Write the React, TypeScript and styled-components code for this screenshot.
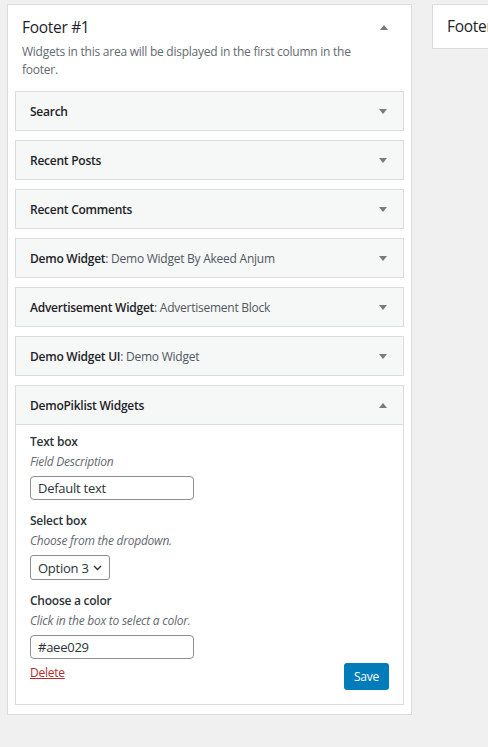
import styled, { createGlobalStyle } from "styled-components";

const GlobalStyle = createGlobalStyle`
  html, body {
    margin: 0;
    padding: 0;
    background: #f0f0f1;
    overflow: hidden;
  }
  body {
    font-family: "Open Sans", "Noto Sans", sans-serif;
    font-size: 12px;
    letter-spacing: -0.25px;
    color: #1d2327;
  }
  * {
    box-sizing: border-box;
  }
`;

type Widget = {
  name: string;
  subtitle?: string;
};

const widgets: Widget[] = [
  { name: "Search" },
  { name: "Recent Posts" },
  { name: "Recent Comments" },
  { name: "Demo Widget", subtitle: "Demo Widget By Akeed Anjum" },
  { name: "Advertisement Widget", subtitle: "Advertisement Block" },
  { name: "Demo Widget UI", subtitle: "Demo Widget" },
];

function Arrow({ up }: { up?: boolean }) {
  return (
    <ArrowIcon width="8" height="5" viewBox="0 0 8 5" aria-hidden="true">
      {up ? <polygon points="0,5 8,5 4,0" /> : <polygon points="0,0 8,0 4,5" />}
    </ArrowIcon>
  );
}

export default function App() {
  return (
    <>
      <GlobalStyle />
      <Page>
        <Sidebar>
          <SidebarHead>
            <SidebarTitle>Footer #1</SidebarTitle>
            <HeadArrow>
              <Arrow up />
            </HeadArrow>
          </SidebarHead>
          <SidebarDesc>
            Widgets in this area will be displayed in the first column in the
            footer.
          </SidebarDesc>
          <WidgetList>
            {widgets.map((w) => (
              <WidgetBox key={w.name}>
                <WidgetTop>
                  <WidgetTitle>
                    {w.name}
                    {w.subtitle && <WidgetSub>: {w.subtitle}</WidgetSub>}
                  </WidgetTitle>
                  <Arrow />
                </WidgetTop>
              </WidgetBox>
            ))}
            <WidgetBox>
              <WidgetTop $open>
                <WidgetTitle>DemoPiklist Widgets</WidgetTitle>
                <Arrow up />
              </WidgetTop>
              <WidgetInside>
                <Field>
                  <FieldLabel>Text box</FieldLabel>
                  <FieldDesc>Field Description</FieldDesc>
                  <TextInput defaultValue="Default text" />
                </Field>
                <Field>
                  <FieldLabel>Select box</FieldLabel>
                  <FieldDesc>Choose from the dropdown.</FieldDesc>
                  <SelectBox>
                    Option 3
                    <svg width="9" height="6" viewBox="0 0 9 6" aria-hidden="true">
                      <polyline
                        points="1,1 4.5,4.5 8,1"
                        fill="none"
                        stroke="#2c3338"
                        strokeWidth="1.4"
                      />
                    </svg>
                  </SelectBox>
                </Field>
                <Field>
                  <FieldLabel>Choose a color</FieldLabel>
                  <FieldDesc>Click in the box to select a color.</FieldDesc>
                  <TextInput defaultValue="#aee029" />
                </Field>
                <Actions>
                  <DeleteLink href="#">Delete</DeleteLink>
                  <SaveButton>Save</SaveButton>
                </Actions>
              </WidgetInside>
            </WidgetBox>
          </WidgetList>
        </Sidebar>
        <SideColumn>
          <SidebarTitle>Footer #2</SidebarTitle>
        </SideColumn>
      </Page>
    </>
  );
}

const Page = styled.div`
  display: flex;
  align-items: flex-start;
  gap: 20px;
  padding: 4px 0 0 7px;
  width: 700px;
`;

const Sidebar = styled.section`
  width: 405px;
  flex: none;
  background: #fff;
  border: 1px solid #dcdcde;
  padding: 0 7px 9px;
`;

const SidebarHead = styled.div`
  display: flex;
  align-items: center;
  justify-content: space-between;
  padding: 9px 16px 0 7px;
`;

const SidebarTitle = styled.h2`
  margin: 0;
  font-size: 15.5px;
  font-weight: 400;
  line-height: 26px;
  letter-spacing: -0.3px;
  color: #1d2327;
  white-space: nowrap;
`;

const HeadArrow = styled.span`
  display: flex;
`;

const SidebarDesc = styled.p`
  margin: 3px 0 0;
  padding: 0 7px;
  max-width: 360px;
  line-height: 18px;
  color: #646970;
`;

const WidgetList = styled.div`
  display: flex;
  flex-direction: column;
  gap: 9px;
  margin-top: 12px;
`;

const WidgetBox = styled.div`
  border: 1px solid #dcdcde;
  background: #fff;
`;

const WidgetTop = styled.div<{ $open?: boolean }>`
  display: flex;
  align-items: center;
  justify-content: space-between;
  height: ${(p) => (p.$open ? "39px" : "38px")};
  padding: 0 16px 0 14px;
  background: #f6f7f7;
  border-bottom: ${(p) => (p.$open ? "1px solid #dcdcde" : "none")};
`;

const WidgetTitle = styled.h3`
  margin: 0;
  font-size: 12px;
  font-weight: 600;
  color: #1d2327;
`;

const WidgetSub = styled.span`
  font-weight: 400;
  color: #50575e;
`;

const ArrowIcon = styled.svg`
  fill: #787c82;
  flex: none;
`;

const WidgetInside = styled.div`
  padding: 7px 14px 14px;
`;

const Field = styled.div`
  display: flex;
  flex-direction: column;
  align-items: flex-start;
  margin-bottom: 11px;
`;

const FieldLabel = styled.label`
  line-height: 20px;
  font-weight: 600;
  color: #2c3338;
`;

const FieldDesc = styled.span`
  line-height: 20px;
  font-style: italic;
  color: #646970;
`;

const TextInput = styled.input`
  margin-top: 4px;
  width: 164px;
  height: 24px;
  padding: 0 7px;
  border: 1px solid #8c8f94;
  border-radius: 4px;
  font-family: inherit;
  font-size: 13px;
  letter-spacing: -0.25px;
  color: #2c3338;
  background: #fff;
`;

const SelectBox = styled.div`
  margin-top: 4px;
  display: flex;
  align-items: center;
  justify-content: space-between;
  width: 80px;
  height: 25px;
  padding: 0 7px 0 7px;
  border: 1px solid #8c8f94;
  border-radius: 3px;
  font-size: 13px;
  white-space: nowrap;
  color: #2c3338;
`;

const Actions = styled.div`
  display: flex;
  justify-content: space-between;
  align-items: flex-start;
  margin-top: -7px;
`;

const DeleteLink = styled.a`
  line-height: 20px;
  color: #b32d2e;
  text-decoration: underline;
`;

const SaveButton = styled.button`
  height: 27px;
  padding: 0 10px;
  border: none;
  border-radius: 3px;
  background: #007cba;
  color: #fff;
  font-family: inherit;
  font-size: 12px;
  letter-spacing: -0.25px;
`;

const SideColumn = styled.section`
  width: 300px;
  flex: none;
  height: 45px;
  background: #fff;
  border: 1px solid #dcdcde;
  padding: 8px 14px;
`;
